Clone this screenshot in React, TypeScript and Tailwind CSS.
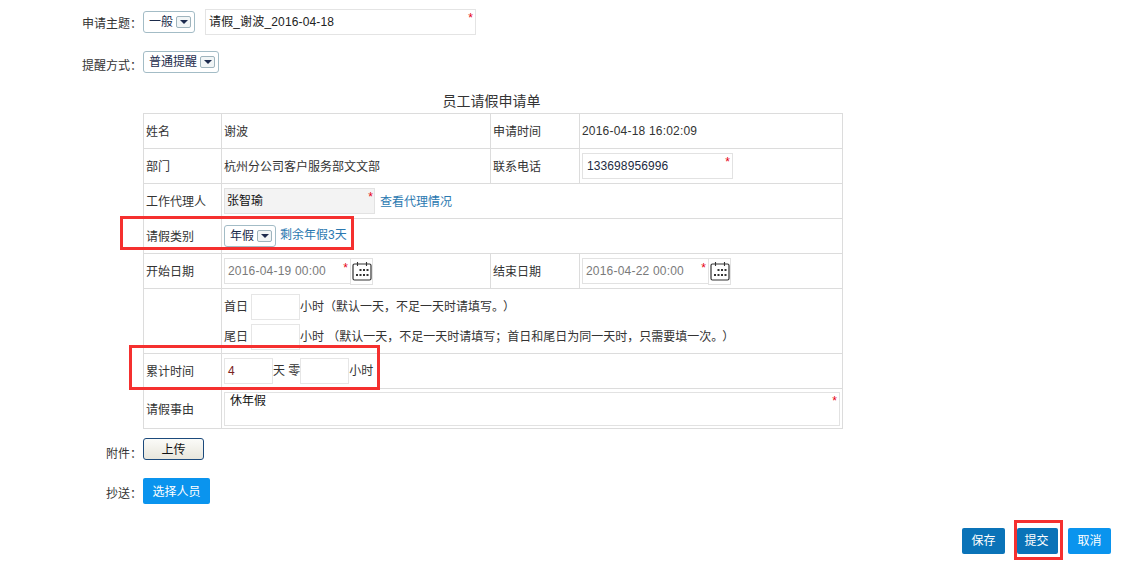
const font = { fontFamily: '"Liberation Sans", "Noto Sans CJK SC", sans-serif' };

function Sel({ label, w }: { label: string; w: string }) {
  return (
    <div className={`${w} h-[22px] border border-[#a3bcc6] rounded-[3px] bg-white flex items-center justify-between pl-[5px] pr-[3px] text-[12px] text-[#1b2b4b] whitespace-nowrap`}>
      <span className="leading-none">{label}</span>
      <span className="w-[15px] h-[12px] border border-[#9fb4bd] rounded-[2px] bg-[#f1f5f6] flex items-center justify-center">
        <span className="w-0 h-0 border-l-[4px] border-r-[4px] border-t-[4px] border-l-transparent border-r-transparent border-t-[#1d2b4e]" />
      </span>
    </div>
  );
}

function Star({ className }: { className: string }) {
  return <span className={`absolute text-[12px] leading-none text-[#e60012] ${className}`}>*</span>;
}

function Cal() {
  return (
    <span className="ml-[-1px] w-[23px] h-[27px] border border-[#e2e2e2] bg-white flex items-center justify-center shrink-0">
      <svg width="20" height="20" viewBox="0 0 20 20" fill="none">
        <rect x="1" y="3" width="18" height="16" rx="1.5" stroke="#333" strokeWidth="1.2" />
        <path d="M5.5 1v4M14.5 1v4" stroke="#333" strokeWidth="1.1" />
        <g fill="#333">
          <rect x="7.5" y="8" width="2" height="2" /><rect x="11" y="8" width="2" height="2" /><rect x="14.5" y="8" width="2" height="2" />
          <rect x="4" y="13" width="2" height="2" /><rect x="7.5" y="13" width="2" height="2" /><rect x="11" y="13" width="2" height="2" /><rect x="14.5" y="13" width="2" height="2" />
        </g>
      </svg>
    </span>
  );
}

function DateBox({ value }: { value: string }) {
  return (
    <div className="flex items-start">
      <div className="relative w-[127px] h-[26px] border border-[#e2e2e2] pl-[3px] flex items-center text-[12px] tracking-[0.2px] text-[#7a7a7a] whitespace-nowrap">
        {value}
        <Star className="right-[2px] top-[3px]" />
      </div>
      <Cal />
    </div>
  );
}

const th = "border border-[#dcdcdc] pl-[2px] pt-[2px] font-normal text-left text-[12px] text-[#333] align-middle";
const td = "border border-[#dcdcdc] px-[2px] text-[12px] text-[#333] align-middle";
const small = "w-[49px] h-[26px] border border-[#e6e6e6] shrink-0";

export default function App() {
  return (
    <div className="relative w-[1127px] h-[564px] bg-white overflow-hidden text-[12px] text-[#333]" style={font}>
      <div className="pt-[9px] pl-[82px] flex flex-col">
        <div className="flex items-start h-[40px]">
          <span className="w-[61px] pt-[6px] whitespace-nowrap">申请主题：</span>
          <div className="pt-[2px]"><Sel label="一般" w="w-[52px]" /></div>
          <div className="relative ml-[10px] w-[271px] h-[26px] border border-[#e4e4e4] pl-[3px] flex items-center text-[12px] tracking-[0.15px] text-[#222]">
            请假_谢波_2016-04-18
            <Star className="right-[2px] top-[2px]" />
          </div>
        </div>
        <div className="flex items-start h-[43px] pt-[2px]">
          <span className="w-[61px] pt-[6px] whitespace-nowrap">提醒方式：</span>
          <Sel label="普通提醒" w="w-[76px]" />
        </div>
        <div className="w-[819px] text-center text-[14px] leading-[18px] h-[18px] text-[#333]">员工请假申请单</div>
      </div>

      <table className="ml-[143px] mt-[3px] w-[700px] h-[316px] table-fixed border-collapse">
        <colgroup>
          <col className="w-[78px]" /><col className="w-[269px]" /><col className="w-[89px]" /><col />
        </colgroup>
        <tbody>
          <tr className="h-[35px]">
            <th className={th}>姓名</th><td className={`${td} pt-[2px]`}>谢波</td>
            <th className={th}>申请时间</th><td className={`${td} tracking-[0.2px]`}>2016-04-18 16:02:09</td>
          </tr>
          <tr className="h-[35px]">
            <th className={th}>部门</th><td className={`${td} pt-[2px]`}>杭州分公司客户服务部文文部</td>
            <th className={th}>联系电话</th>
            <td className={td}>
              <div className="relative w-[151px] h-[26px] border border-[#e2e2e2] pl-[4px] flex items-center text-[#1d2b3f] tracking-[0.1px]">
                133698956996
                <Star className="right-[2px] top-[2px]" />
              </div>
            </td>
          </tr>
          <tr className="h-[35px]">
            <th className={th}>工作代理人</th>
            <td className={td} colSpan={3}>
              <div className="flex items-center gap-[5px]">
                <div className="relative w-[151px] h-[26px] border border-[#e2e2e2] bg-[#f3f3f3] pl-[2px] flex items-center text-[#111]">
                  张智瑜
                  <Star className="right-[1px] top-[2px]" />
                </div>
                <span className="text-[#2a78b0] pt-[2px]">查看代理情况</span>
              </div>
            </td>
          </tr>
          <tr className="h-[35px]">
            <th className={th}>请假类别</th>
            <td className={td} colSpan={3}>
              <div className="flex items-center gap-[4px]">
                <Sel label="年假" w="w-[52px]" />
                <span className="text-[#2a78b0] pb-[2px]">剩余年假3天</span>
              </div>
            </td>
          </tr>
          <tr className="h-[35px]">
            <th className={th}>开始日期</th>
            <td className={td}><DateBox value="2016-04-19 00:00" /></td>
            <th className={th}>结束日期</th>
            <td className={td}><DateBox value="2016-04-22 00:00" /></td>
          </tr>
          <tr className="h-[65px]">
            <th className={th}></th>
            <td className={td} colSpan={3}>
              <div className="flex items-center h-[30px] mt-[2px] whitespace-nowrap">
                <span className="w-[27px]">首日</span>
                <div className={small} />
                <span>小时（默认一天，不足一天时请填写。<span className="ml-[5px]">）</span></span>
              </div>
              <div className="flex items-center h-[30px] whitespace-nowrap">
                <span className="w-[27px]">尾日</span>
                <div className={small} />
                <span>小时 （默认一天，不足一天时请填写；首日和尾日为同一天时，只需要填一次。<span className="ml-[5px]">）</span></span>
              </div>
            </td>
          </tr>
          <tr className="h-[35px]">
            <th className={th}>累计时间</th>
            <td className={td} colSpan={3}>
              <div className="flex items-center whitespace-nowrap">
                <div className="w-[49px] h-[26px] border border-[#e6e6e6] pl-[3px] flex items-center text-[#7a2020]">4</div>
                <span>天 零</span>
                <div className="w-[49px] h-[26px] border border-[#e6e6e6]" />
                <span>小时</span>
              </div>
            </td>
          </tr>
          <tr className="h-[40px]">
            <th className={`${th} pt-0`}>请假事由</th>
            <td className={td} colSpan={3}>
              <div className="relative w-[616px] h-[34px] border border-[#e2e2e2] pl-[5px] text-[12px] leading-[16px] text-[#111]">
                休年假
                <Star className="right-[2px] top-[2px]" />
              </div>
            </td>
          </tr>
        </tbody>
      </table>

      <div className="flex pl-[106px] pt-[9px] items-start h-[41px]">
        <span className="w-[37px] pt-[7px] whitespace-nowrap">附件：</span>
        <button className="w-[61px] h-[22px] rounded-[3px] border border-[#1c4a7c] bg-gradient-to-b from-[#fbfbf8] to-[#e8e6dc] text-[12px] text-[#111] leading-none pt-[1px]">上传</button>
      </div>
      <div className="flex pl-[106px] mt-[8px] items-start h-[26px]">
        <span className="w-[37px] pt-[7px] whitespace-nowrap">抄送：</span>
        <button className="w-[67px] h-[26px] rounded-[2px] bg-[#0a94ee] text-[12px] text-white leading-none pt-[1px]">选择人员</button>
      </div>

      <div className="absolute right-[16px] top-[528px] flex">
        <button className="w-[43px] h-[26px] rounded-[2px] bg-[#0a73b8] text-white text-[12px]">保存</button>
        <button className="ml-[12px] w-[41px] h-[26px] rounded-[2px] bg-[#0a73b8] text-white text-[12px] pr-[2px]">提交</button>
        <button className="ml-[10px] w-[43px] h-[26px] rounded-[2px] bg-[#0a94ee] text-white text-[12px]">取消</button>
      </div>

      <div className="absolute left-[120px] top-[216px] w-[234px] h-[34px] border-[3px] border-[#f5302f]" />
      <div className="absolute left-[129px] top-[345px] w-[251px] h-[45px] border-[3px] border-[#f5302f]" />
      <div className="absolute left-[1014px] top-[520px] w-[49px] h-[40px] border-[3px] border-[#f5302f]" />
    </div>
  );
}
